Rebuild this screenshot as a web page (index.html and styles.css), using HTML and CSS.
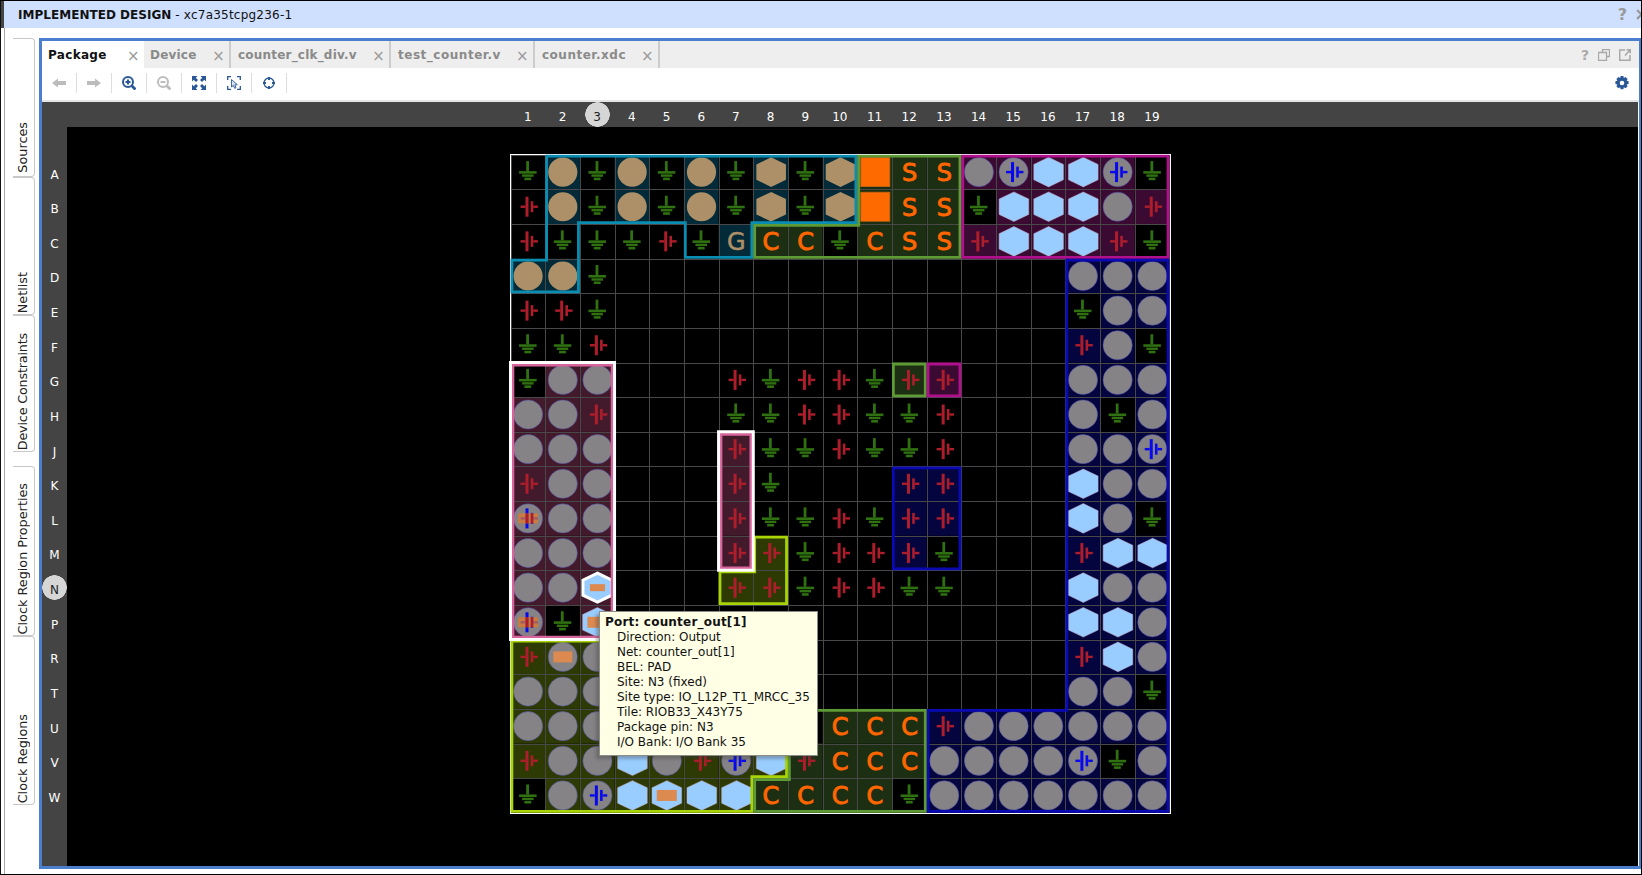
FILE: index.html
```html
<!DOCTYPE html>
<html lang="en">
<head>
<meta charset="utf-8">
<title>Implemented Design - Package</title>
<link rel="stylesheet" href="styles.css">
</head>
<body>
<div class="window">
  <header class="titlebar">
    <div class="title"><b>IMPLEMENTED DESIGN</b> <span class="part">- xc7a35tcpg236-1</span></div>
    <div class="title-tools"><span class="help">?</span><svg class="closeicon" viewBox="0 0 10 10"><path d="M1 1l8 8M9 1l-8 8"/></svg></div>
  </header>
  <div class="workspace">
    <nav class="sidetabs">
      <div class="sidetab t-sources"><span>Sources</span></div>
      <div class="sidetab t-netlist"><span>Netlist</span></div>
      <div class="sidetab t-device"><span>Device Constraints</span></div>
      <div class="sidetab t-props"><span>Clock Region Properties</span></div>
      <div class="sidetab t-regions"><span>Clock Regions</span></div>
    </nav>
    <main class="panel">
      <div class="tabbar">
        <div class="tab active tab-package"><span>Package</span><i class="x">×</i></div>
        <div class="tab tab-device"><span>Device</span><i class="x">×</i></div>
        <div class="tab tab-clk"><span>counter_clk_div.v</span><i class="x">×</i></div>
        <div class="tab tab-test"><span>test_counter.v</span><i class="x">×</i></div>
        <div class="tab tab-xdc"><span>counter.xdc</span><i class="x">×</i></div>
        <div class="tab-tools">
          <span class="tab-help">?</span>
          <svg class="ti" viewBox="0 0 12 12"><path d="M4.5 3V.5h7v7H8.500M.5 3.500h8v8h-8z" fill="none" stroke="#a8a8a8" stroke-width="1.300"/></svg>
          <svg class="ti" viewBox="0 0 12 12"><path d="M6 1H.7v10.300H11V6M6 6.500 11.300.700M7.500.7h3.800v3.800" fill="none" stroke="#a8a8a8" stroke-width="1.500"/></svg>
        </div>
      </div>
      <div class="toolbar">
        <button class="tool"><svg viewBox="0 0 14 14"><path class="off" d="M0 7 6 2.500V5h8v4H6v2.500z"/></svg></button>
        <button class="tool"><svg viewBox="0 0 14 14"><path class="off" d="M14 7 8 2.500V5H0v4h8v2.500z"/></svg></button>
        <button class="tool"><svg viewBox="0 0 14 14"><circle class="ln" cx="6" cy="6" r="5"/><path class="ln" d="M3.500 6h5M6 3.500v5"/><path class="ln thick" d="m9.800 9.800 3.700 3.700"/></svg></button>
        <button class="tool"><svg viewBox="0 0 14 14"><circle class="ln dim" cx="6" cy="6" r="5"/><path class="ln dim" d="M3.500 6h5"/><path class="ln dim thick" d="m9.800 9.800 3.700 3.700"/></svg></button>
        <button class="tool"><svg viewBox="0 0 14 14"><path class="fl" d="M0 0h5.500L3.800 1.700 6 4 4 6 1.700 3.800 0 5.500zM14 0v5.500l-1.700-1.700L10 6 8 4l2.200-2.300L8.500 0zM0 14V8.500l1.700 1.700L4 8l2 2-2.200 2.300L5.500 14zM14 14H8.500l1.700-1.700L8 10l2-2 2.300 2.200L14 8.500z"/></svg></button>
        <button class="tool"><svg viewBox="0 0 14 14"><path class="ln thin" d="M.7 4V.7H4M10 .7h3.300V4M.7 10v3.300H4M10 13.300h3.300V10"/><path class="cur" d="m4.500 3.500 0 7.500 1.900-1.600 1.200 2.900 1.400-.6-1.200-2.800 2.500-.2z"/></svg></button>
        <button class="tool"><svg viewBox="0 0 14 14"><circle class="ln thin" cx="7" cy="7" r="5"/><path class="ln" d="M7 1v3M7 10v3M1 7h3M10 7h3"/></svg></button>
        <button class="tool gear"><svg viewBox="0 0 14 14"><path class="fl" fill-rule="evenodd" d="M5.600 0h2.800l.4 2 1.800-1 2 2-1 1.700 2 .5v2.800l-2 .5 1 1.700-2 2-1.800-1-.4 2H5.600l-.4-2-1.800 1-2-2 1-1.700-2-.5V5.200l2-.5-1-1.700 2-2 1.800 1zM7 4.700a2.300 2.300 0 1 0 0 4.600 2.300 2.300 0 0 0 0-4.600z"/></svg></button>
      </div>
      <div class="ruler-top" id="cols"></div>
      <div class="view">
        <div class="ruler-left" id="rows"></div>
        <div class="canvas">
          <svg class="board" id="board" viewBox="509 154 664 662" xmlns="http://www.w3.org/2000/svg"></svg>
          <div class="tooltip">
            <div class="tip-head">Port: counter_out[1]</div>
            <div>Direction: Output</div>
            <div>Net: counter_out[1]</div>
            <div>BEL: PAD</div>
            <div>Site: N3 (fixed)</div>
            <div>Site type: IO_L12P_T1_MRCC_35</div>
            <div>Tile: RIOB33_X43Y75</div>
            <div>Package pin: N3</div>
            <div>I/O Bank: I/O Bank 35</div>
          </div>
        </div>
      </div>
    </main>
  </div>
</div>
<script src="app.js"></script>
</body>
</html>
```
FILE: styles.css
```css
* { box-sizing: border-box; }
html, body { margin: 0; padding: 0; background: #fff; }
body { width: 1642px; height: 875px; overflow: hidden; font-family: "DejaVu Sans", sans-serif; font-size: 12px; color: #111; }
.window { width: 1642px; height: 875px; display: flex; flex-direction: column; border-top: 1px solid #000; border-bottom: 1px solid #000; border-right: 1px solid #000; border-left: 1px solid #111; overflow: hidden; }
.titlebar { height: 27px; flex: none; display: flex; align-items: center; justify-content: space-between; background: #cfdffe; margin-left: -1px; border-left: 4px solid #444; padding-left: 14px; overflow: hidden; }
.title { font-size: 12px; }
.title b { font-weight: 700; letter-spacing: .03px; }
.part { letter-spacing: .22px; }
.title-tools { display: flex; gap: 9px; align-items: center; margin-right: -6px; color: #999; font-weight: 700; font-size: 16px; }
.closeicon { width: 11px; height: 11px; fill: none; stroke: #999; stroke-width: 2; }
.workspace { flex: 1; display: flex; min-height: 0; padding-left: 3px; }
.sidetabs { width: 35px; flex: none; border-left: 1px solid #aaa; padding: 10px 0 0 8px; display: flex; flex-direction: column; }
.sidetab { width: 22px; border: 1px solid #c8c8c8; border-left: none; border-radius: 0 4px 4px 0; display: flex; align-items: flex-end; justify-content: flex-start; padding-bottom: 1px; color: #222; font-size: 12.800px; }
.sidetab span { writing-mode: vertical-rl; transform: rotate(180deg); white-space: nowrap; line-height: 20px; }
.t-sources { height: 139px; padding-bottom: 3px; }
.t-netlist { height: 138px; }
.t-device { height: 137px; letter-spacing: -.2px; }
.t-props { height: 170px; margin-top: 14px; }
.t-regions { height: 169px; }
.panel { flex: 1; min-width: 0; margin: 10px 0 5px 0; border: 3px solid #4a7fd0; border-right-width: 2px; display: flex; flex-direction: column; background: #fff; }
.tabbar { height: 27px; flex: none; display: flex; background: #eeeeee; align-items: stretch; }
.tab { position: relative; display: flex; align-items: center; padding-left: 6px; color: #8a8a8a; font-weight: 700; font-size: 12px; border-right: 2px solid #ccc; letter-spacing: .2px; }
.tab .x { font-style: normal; font-weight: 400; font-size: 15px; color: #9a9a9a; margin-left: auto; margin-right: 4px; margin-top: 2px; }
.tab.active { background: #fff; color: #111; border-right: none; }
.tab-package { width: 102px; letter-spacing: .32px; }
.tab-device { width: 87px; }
.tab-clk { width: 160px; padding-left: 7px; }
.tab-test { width: 144px; padding-left: 7px; letter-spacing: .52px; }
.tab-xdc { width: 125px; padding-left: 7px; letter-spacing: .5px; }
.tab-tools { margin-left: auto; display: flex; align-items: center; gap: 9px; padding-right: 8px; }
.tab-help { color: #aaa; font-weight: 700; font-size: 14px; }
.ti { width: 12px; height: 12px; }
.toolbar { height: 34px; flex: none; display: flex; align-items: center; padding: 0 0 2px 0; background: #fff; border-bottom: 2px solid #e4e4e4; }
.tool { width: 35px; height: 20px; padding: 0; background: none; border: none; border-right: 1px solid #ddd; display: flex; align-items: center; justify-content: center; }
.tool svg { width: 14px; height: 14px; display: block; }
.gear { margin-left: auto; border-right: none; width: 35px; }
.off { fill: #bcbcbc; }
.ln { fill: none; stroke: #2a5796; stroke-width: 2; }
.ln.thin { stroke-width: 1.3; }
.ln.thick { stroke-width: 2.800; }
.ln.dim { stroke: #bcbcbc; }
.fl { fill: #2a5796; }
.cur { fill: #d8e4f5; stroke: #2a5796; stroke-width: .9; }
.ruler-top { height: 25px; flex: none; display: flex; background: #444; padding-left: 468.500px; margin-right: 1px; }
.col-label { width: 34.68px; flex: none; display: flex; align-items: center; justify-content: center; color: #fff; font-size: 12px; position: relative; padding-top: 4px; }
.view { flex: 1; min-height: 0; display: flex; margin-right: 1px; }
.ruler-left { width: 25px; flex: none; background: #444; padding-top: 27.800px; display: flex; flex-direction: column; }
.row-label { height: 34.63px; flex: none; display: flex; align-items: center; justify-content: center; color: #fff; font-size: 12px; padding-top: 5px; }
.cur-mark { color: #222; }
.col-label.cur-mark, .row-label.cur-mark { background: radial-gradient(circle closest-side, #d6d6d6 96%, transparent 100%) center / 25px 25px no-repeat; }
.canvas { flex: 1; min-width: 0; position: relative; background: #000; padding: 27px 0 0 442px; }
.board { display: block; width: 664px; height: 662px; }
.tooltip { position: absolute; left: 532px; top: 484px; width: 219px; height: 145px; background: #ffffe6; border: 1px solid #8c8c86; box-shadow: -3px 3px 3px rgba(60,60,60,.35); padding: 3px 0 0 17px; font-size: 12px; line-height: 15px; color: #111; white-space: nowrap; }
.tip-head { font-weight: 700; margin-left: -12px; letter-spacing: .2px; }
.cell-grid { stroke: #484848; stroke-width: 1; }
.ol { fill: none; }
.pkg { fill: none; stroke: #fff; stroke-width: 1; }
.selwhite { fill: none; stroke: #fff; stroke-width: 3; }
.gnd { fill: #2f7010; }
.pwr { fill: #ae1d2b; }
.pwr-b { fill: #0808ee; }
.pad-o { fill: #858385; stroke: #4a4ab0; stroke-width: .5; }
.pad-t { fill: #ad9068; }
.pad-h { fill: #99ccff; stroke: #c6b0c4; stroke-width: .5; }
.pad-T { fill: #ad9068; }
.pad-O { fill: #ff6a00; stroke: #c86414; stroke-width: .8; }
.pad-sel { fill: #99ccff; stroke: #fff; stroke-width: 3; }
.place { fill: #dc8a50; }
.place-over { fill: #e07a2a; opacity: .72; }
.let { font-family: "DejaVu Sans", sans-serif; font-weight: 400; font-size: 24px; fill: #ff6600; stroke: #ff6600; stroke-width: .9; text-anchor: middle; }
.let-g { fill: #ad9068; stroke: #ad9068; stroke-width: .5; }
```
FILE: app.js
```js
(function () {
  var NS = "http://www.w3.org/2000/svg";
  var board = document.getElementById("board");
  var COLS = ["1","2","3","4","5","6","7","8","9","10","11","12","13","14","15","16","17","18","19"];
  var ROWS = "ABCDEFGHJKLMNPRTUVW".split("");
  var X = function (c) { return 510.5 + c * 34.68; };
  var Y = function (r) { return 154.8 + r * 34.63; };
  var TINT = { t: "#032a38", v: "#1c2f12", m: "#3b0a33", n: "#04043f", p: "#431a2c", y: "#2e3a04" };
  var EDGE = { t: "#0b8db2", v: "#5e9a35", m: "#b0108c", n: "#0a0ab4", p: "#d8649c", y: "#a8d408" };

  var dots = function (n) { return new Array(n + 1).join("."); };
  var REGION = [
    ".tttttttttvvvmmmmmm",
    ".tttttttttvvvmmmmmm",
    ".t...ttvvvvvvmmmmmm",
    "tt" + dots(14) + "nnn",
    dots(16) + "nnn",
    dots(16) + "nnn",
    "ppp" + dots(8) + "vm...nnn",
    "ppp" + dots(13) + "nnn",
    "ppp...p" + dots(9) + "nnn",
    "ppp...p....nn...nnn",
    "ppp...p....nn...nnn",
    "ppp...py...nn...nnn",
    "ppp...yy" + dots(8) + "nnn",
    "ppp" + dots(13) + "nnn",
    "yyy" + dots(13) + "nnn",
    "yyy" + dots(13) + "nnn",
    "yyyyyyyyvvvvnnnnnnn",
    "yyyyyyyyvvvvnnnnnnn",
    "yyyyyyyvvvvvnnnnnnn"
  ];
  var PADS = [
    "gtgtgtgTgTOSSobhhbg",
    "rtgtgtgTgTOSSghhhor",
    "rgggrgGCCgCSSrhhhrg",
    "ttg" + dots(13) + "ooo",
    "rrg" + dots(13) + "goo",
    "ggr" + dots(13) + "rog",
    "goo...rgrrgrr...ooo",
    "oor...ggrrggr...ogo",
    "ooo...rggrggr...oob",
    "roo...rg...rr...hoo",
    "Boo...rggrgrr...hog",
    "ooo...rrgrrrg...rhh",
    "ooX...rrgrrgg...hoo",
    "BgH" + dots(13) + "hho",
    "rQo" + dots(13) + "rho",
    "ooo" + dots(13) + "oog",
    "oooooooogCCCroooooo",
    "roohorbhrCCCoooobgo",
    "gobhHhhCCCCgooooooo"
  ];
  var OUTLINES = [
    ["t", [[1,0],[10,0],[10,2],[7,2],[7,3],[5,3],[5,2],[2,2],[2,4],[0,4],[0,3],[1,3]]],
    ["v", [[10,0],[13,0],[13,3],[7,3],[7,2],[10,2]]],
    ["m", [[13,0],[19,0],[19,3],[13,3]]],
    ["n", [[16,3],[19,3],[19,19],[12,19],[12,16],[16,16]]],
    ["y", [[0,14],[8,14],[8,18],[7,18],[7,19],[0,19]]],
    ["v", [[8,16],[12,16],[12,19],[7,19],[7,18],[8,18]]],
    ["y", [[7,11],[8,11],[8,13],[6,13],[6,12],[7,12]]],
    ["n", [[11,9],[13,9],[13,12],[11,12]]],
    ["v", [[11,6],[12,6],[12,7],[11,7]]],
    ["m", [[12,6],[13,6],[13,7],[12,7]]],
    ["p", [[0,6],[3,6],[3,14],[0,14]], true],
    ["p", [[6,8],[7,8],[7,12],[6,12]], true]
  ];

  function el(parent, name, attrs, text) {
    var n = document.createElementNS(NS, name);
    for (var k in attrs) n.setAttribute(k, attrs[k]);
    if (text) n.textContent = text;
    parent.appendChild(n);
    return n;
  }
  function hexPts(cx, cy, r) {
    var h = r * 0.52;
    return [[cx, cy - r], [cx + r, cy - h], [cx + r, cy + h], [cx, cy + r], [cx - r, cy + h], [cx - r, cy - h]]
      .map(function (p) { return p.join(","); }).join(" ");
  }
  function rect(g, cls, x, y, w, h) {
    el(g, "rect", { "class": cls, x: x, y: y, width: w, height: h });
  }
  function ground(cx, cy) {
    var g = el(board, "g", {});
    rect(g, "gnd", cx - 1.4, cy - 11, 2.8, 10);
    rect(g, "gnd", cx - 8.5, cy - 1, 17.5, 2.6);
    rect(g, "gnd", cx - 5.5, cy + 2.300, 11.5, 2.4);
    rect(g, "gnd", cx - 3.2, cy + 5.5, 6.8, 2.6);
  }
  function power(cx, cy, cls) {
    var g = el(board, "g", {});
    rect(g, cls, cx - 2.6, cy - 10, 3, 20);
    rect(g, cls, cx - 7.6, cy - 1.2, 5, 2.4);
    rect(g, cls, cx + 2.6, cy - 5.5, 2.6, 11);
    rect(g, cls, cx + 5.2, cy - 1.2, 4.6, 2.4);
  }

  var c, r;
  // cell tints (ground cells stay black)
  for (r = 0; r < 19; r++) {
    for (c = 0; c < 19; c++) {
      var reg = REGION[r].charAt(c), pad = PADS[r].charAt(c);
      if (reg !== "." && pad !== "g") {
        el(board, "rect", { x: X(c), y: Y(r), width: 34.68, height: 34.63, fill: TINT[reg] });
      }
    }
  }
  // grid
  for (c = 0; c <= 19; c++) {
    var gx = Math.round(X(c)) + 0.5;
    el(board, "line", { "class": "cell-grid", x1: gx, x2: gx, y1: Y(0), y2: Y(19) });
  }
  for (r = 0; r <= 19; r++) {
    var gy = Math.round(Y(r)) + 0.5;
    el(board, "line", { "class": "cell-grid", x1: X(0), x2: X(19), y1: gy, y2: gy });
  }
  // pads
  for (r = 0; r < 19; r++) {
    for (c = 0; c < 19; c++) {
      var p = PADS[r].charAt(c);
      var cx = X(c) + 17.6, cy = Y(r) + 17.3;
      switch (p) {
        case "g": ground(cx - 0.5, cy); break;
        case "r": power(cx, cy, "pwr"); break;
        case "o": el(board, "circle", { "class": "pad-o", cx: cx, cy: cy, r: 14.6 }); break;
        case "t": el(board, "circle", { "class": "pad-t", cx: cx, cy: cy, r: 14.6 }); break;
        case "b":
          el(board, "circle", { "class": "pad-o", cx: cx, cy: cy, r: 14.6 });
          power(cx, cy, "pwr-b");
          break;
        case "B":
          el(board, "circle", { "class": "pad-o", cx: cx, cy: cy, r: 14.6 });
          power(cx, cy, "pwr-b");
          rect(board, "place-over", cx - 10, cy - 5, 20, 10);
          rect(board, "pwr", cx - 2.6, cy - 5, 3, 10);
          rect(board, "pwr", cx + 2.6, cy - 5, 2.6, 10);
          break;
        case "Q":
          el(board, "circle", { "class": "pad-o", cx: cx, cy: cy, r: 14.6 });
          rect(board, "place", cx - 9.5, cy - 5.5, 19, 11);
          break;
        case "h": el(board, "polygon", { "class": "pad-h", points: hexPts(cx + 0.3, cy, 14.8) }); break;
        case "T": el(board, "polygon", { "class": "pad-T", points: hexPts(cx + 0.3, cy, 14.8) }); break;
        case "H":
          el(board, "polygon", { "class": "pad-h", points: hexPts(cx, cy, 14.8) });
          rect(board, "place", cx - 10, cy - 5.5, 20, 11);
          break;
        case "X":
          el(board, "polygon", { "class": "pad-sel", points: hexPts(cx, cy, 14.5) });
          rect(board, "place", cx - 7.5, cy - 3.5, 15, 7);
          break;
        case "O": rect(board, "pad-O", cx - 14.1, cy - 14.5, 29, 29); break;
        case "S": case "C": el(board, "text", { "class": "let", x: cx, y: cy + 9 }, p); break;
        case "G": el(board, "text", { "class": "let let-g", x: cx, y: cy + 9 }, p); break;
      }
    }
  }
  // package outline and bank outlines
  el(board, "rect", { "class": "pkg", x: 510.5, y: 154.5, width: 660, height: 659 });
  OUTLINES.forEach(function (o, i) {
    var pts = o[1].map(function (q) { return X(q[0]) + "," + Y(q[1]); }).join(" ");
    var cp = el(board, "clipPath", { id: "bank" + i });
    el(cp, "polygon", { points: pts });
    el(board, "polygon", { "class": "ol", points: pts, stroke: EDGE[o[0]], "stroke-width": o[2] ? 7.6 : 5.6, "clip-path": "url(#bank" + i + ")" });
    if (o[2]) el(board, "polygon", { "class": "selwhite", points: pts });
  });

  var cols = document.getElementById("cols");
  COLS.forEach(function (t, i) {
    var d = document.createElement("div");
    d.className = "col-label" + (i === 2 ? " cur-mark" : "");
    d.textContent = t;
    cols.appendChild(d);
  });
  var rows = document.getElementById("rows");
  ROWS.forEach(function (t) {
    var d = document.createElement("div");
    d.className = "row-label" + (t === "N" ? " cur-mark" : "");
    d.textContent = t;
    rows.appendChild(d);
  });
})();
```
